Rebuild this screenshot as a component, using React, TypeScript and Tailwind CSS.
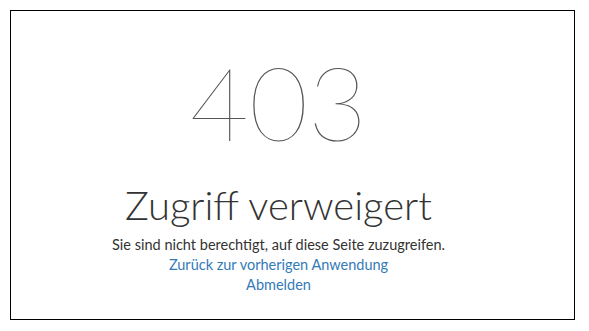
export default function App() {
  return (
    <div className="h-[331px] w-[589px] bg-white p-[10px]" style={{ fontFamily: "Lato, 'Noto Sans', sans-serif" }}>
      <div className="flex h-[310px] w-[565px] flex-col items-center border border-black bg-white pr-[28px] pt-[40px]">
        <h1 className="text-[102px] font-thin leading-none text-[#555]">403</h1>
        <h2 className="mt-[32px] text-[40px] font-light leading-none text-[#333]">Zugriff verweigert</h2>
        <p className="mt-[10px] text-[14.5px] leading-[20px] text-[#333]">
          Sie sind nicht berechtigt, auf diese Seite zuzugreifen.
        </p>
        <a href="#" className="text-[14.5px] leading-[20px] text-[#337ab7]">
          Zurück zur vorherigen Anwendung
        </a>
        <a href="#" className="text-[14.5px] leading-[20px] text-[#337ab7]">
          Abmelden
        </a>
      </div>
    </div>
  );
}
